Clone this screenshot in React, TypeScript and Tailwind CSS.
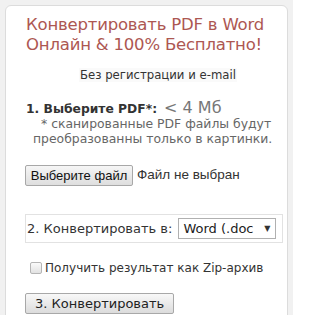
import { useState } from "react";

const verdana = { fontFamily: '"DejaVu Sans", Verdana, sans-serif' };
const arial = { fontFamily: '"Liberation Sans", Arial, sans-serif' };

export default function App() {
  const [zip, setZip] = useState(false);

  return (
    <div className="h-[315px] w-[293px] overflow-hidden bg-[#f1f1f1] px-[5px] pt-[5px]" style={verdana}>
      <div className="h-[330px] rounded-t-[6px] border border-[#dcdcdc] bg-white pl-[20px] pr-[4px] pt-[9px]">
        <h1 className="text-[16.5px] leading-[20px] tracking-[-0.2px] text-[#ad5752]">
          Конвертировать PDF в Word
          <br />
          Онлайн &amp; 100% Бесплатно!
        </h1>

        <div className="mt-[7px] pl-[53px]">
          <span className="bg-[#fafafa] px-[1px] text-[11.7px] leading-[18px] text-[#333]">
            Без регистрации и e-mail
          </span>
        </div>

        <div className="mt-[14px] flex h-[16px] items-baseline gap-[7px]">
          <span className="text-[12.3px] leading-[16px] font-bold text-[#333]">1. Выберите PDF*:</span>
          <span className="text-[16px] leading-[16px] text-[#777]">&lt; 4 Мб</span>
        </div>
        <p className="pl-[7px] indent-[8px] text-[12.4px] leading-[15px] text-[#666]">
          * сканированные PDF файлы будут преобразованны только в картинки.
        </p>

        <div className="mt-[19px] flex items-center gap-[4px] text-[13px]" style={arial}>
          <button className="-ml-[1px] h-[21px] w-[108px] rounded-[2px] border border-[#a8a8a8] bg-gradient-to-b from-[#f6f6f6] to-[#dedede] leading-[19px] text-[#111]">
            Выберите файл
          </button>
          <span className="text-[13.5px] text-[#333]">Файл не выбран</span>
        </div>

        <div className="-ml-[1px] mt-[28px] flex h-[29px] items-center border border-[#e2e2e2] pl-[1px]">
          <span className="text-[13px] leading-[16px] text-[#333]">2. Конвертировать в:</span>
          <div className="ml-[6px] flex h-[21px] w-[98px] items-center justify-between border border-[#b0b0b0] bg-white pl-[4px] pr-[5px]">
            <span className="text-[13px] leading-[18px] text-[#222]">Word (.doc</span>
            <span className="text-[8px] text-[#333]">▼</span>
          </div>
        </div>

        <label className="mt-[17px] flex h-[16px] items-center gap-[3px] pl-[4px] text-[12px] leading-[16px] text-[#333]">
          <input
            type="checkbox"
            checked={zip}
            onChange={() => setZip(!zip)}
            className="h-[12px] w-[12px] appearance-none rounded-[2px] border border-[#b5b5b5] bg-gradient-to-b from-[#fafafa] to-[#e2e2e2]"
          />
          Получить результат как Zip-архив
        </label>

        <button className="-ml-[1px] mt-[17px] h-[21px] w-[149px] rounded-[2px] border border-[#a8a8a8] bg-gradient-to-b from-[#f8f8f8] to-[#dcdcdc] pl-[9px] text-left text-[13px] leading-[19px] text-[#222]">
          3. Конвертировать
        </button>
      </div>
    </div>
  );
}
